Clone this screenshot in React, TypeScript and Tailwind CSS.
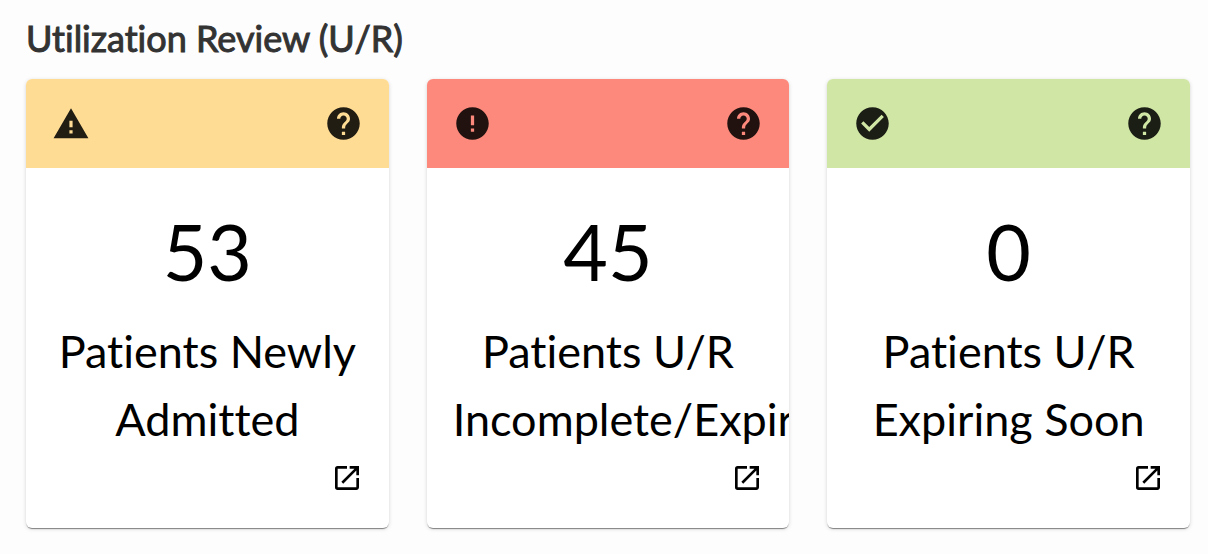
import { MdCheckCircle, MdError, MdHelp, MdOpenInNew, MdWarning } from "react-icons/md";
import type { IconType } from "react-icons";

interface ReviewCard {
  id: string;
  count: number;
  lines: string[];
  headerClass: string;
  icon: IconType;
  iconClass: string;
}

const cards: ReviewCard[] = [
  {
    id: "newly-admitted",
    count: 53,
    lines: ["Patients Newly", "Admitted"],
    headerClass: "bg-[#ffdc94]",
    icon: MdWarning,
    iconClass: "h-[38px] w-[38px]",
  },
  {
    id: "incomplete",
    count: 45,
    lines: ["Patients U/R", "Incomplete/Expired"],
    headerClass: "bg-[#fc897b]",
    icon: MdError,
    iconClass: "h-[39px] w-[39px]",
  },
  {
    id: "expiring-soon",
    count: 0,
    lines: ["Patients U/R", "Expiring Soon"],
    headerClass: "bg-[#d0e6a5]",
    icon: MdCheckCircle,
    iconClass: "h-[39px] w-[39px]",
  },
];

function StatCard({ card }: { card: ReviewCard }) {
  const Icon = card.icon;
  const name = card.lines.join(" ");

  return (
    <article className="min-w-0 overflow-hidden rounded-md bg-white shadow-[0_2px_1px_-1px_rgba(0,0,0,0.35),0_1px_1px_rgba(0,0,0,0.14),0_1px_4px_rgba(0,0,0,0.14)]">
      <div
        className={`flex h-[89px] items-center justify-between px-[26px] text-black/87 ${card.headerClass}`}
      >
        <Icon className={card.iconClass} />
        <button type="button" aria-label={`Help: ${name}`}>
          <MdHelp className="h-[39px] w-[39px]" />
        </button>
      </div>
      <div className="px-[26px] pt-[37px] pb-[34px]">
        <p className="text-center text-[77px] leading-[92px]">{card.count}</p>
        <h2 className="mt-5 flex flex-col text-center text-[45px] leading-[68px]">
          {card.lines.map((line) => (
            <span key={line} className="whitespace-nowrap">
              {line}
            </span>
          ))}
        </h2>
        <div className="mt-[9px] flex justify-end">
          <a href="#" aria-label={`Open ${name}`}>
            <MdOpenInNew className="h-8 w-8" />
          </a>
        </div>
      </div>
    </article>
  );
}

export default function App() {
  return (
    <main className="min-h-screen bg-[#fdfdfd] pt-3.5 pr-[18px] pb-6 pl-[26px] font-['Lato',sans-serif] text-black [font-variant-ligatures:none]">
      <h1 className="text-4xl leading-[48px] font-normal text-[#333] [-webkit-text-stroke:1px_#333]">
        Utilization Review (U/R)
      </h1>
      <div className="mt-[17px] grid grid-cols-3 gap-[38px]">
        {cards.map((card) => (
          <StatCard key={card.id} card={card} />
        ))}
      </div>
    </main>
  );
}
